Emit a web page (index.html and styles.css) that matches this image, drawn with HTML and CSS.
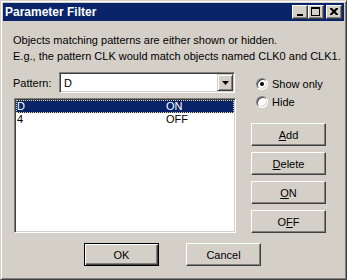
FILE: index.html
```html
<!DOCTYPE html>
<html lang="en">
<head>
  <meta charset="UTF-8">
  <title>Parameter Filter</title>
  <link rel="stylesheet" href="styles.css">
</head>
<body>

  <div class="window">
    <div class="titlebar">
      <span class="title">Parameter Filter</span>
      <div class="title-buttons">
        <button class="tbtn">
          <svg width="6" height="9" viewBox="0 0 6 9"><rect x="0" y="7" width="6" height="2"/></svg>
        </button>
        <button class="tbtn">
          <svg width="9" height="9" viewBox="0 0 9 9"><path fill-rule="evenodd" d="M0 0h9v9H0z M1 2v6h7V2z"/></svg>
        </button>
        <button class="tbtn close">
          <svg width="8" height="7" viewBox="0 0 8 7"><path d="M0 0h2l2 2 2-2h2v1L5.5 3.5 8 6v1H6L4 5 2 7H0V6l2.5-2.5L0 1z"/></svg>
        </button>
      </div>
    </div>

    <div class="content">
      <p class="intro">
        Objects matching patterns are either shown or hidden.<br>
        E.g., the pattern CLK would match objects named CLK0 and CLK1.
      </p>

      <div class="main">
        <div class="left">
          <div class="pattern-row">
            <label class="pattern-label">Pattern:</label>
            <div class="combo">
              <span class="combo-text">D</span>
              <span class="combo-btn">
                <svg width="7" height="4" viewBox="0 0 7 4"><path d="M0 0h7L3.5 4z"/></svg>
              </span>
            </div>
          </div>

          <!-- pattern list -->
          <div class="list">
            <div class="item selected"><span class="name">D</span><span class="state">ON</span></div>
            <div class="item"><span class="name">4</span><span class="state">OFF</span></div>
          </div>
        </div>

        <div class="right">
          <div class="radios">
            <div class="radio-row"><span class="radio checked"></span>Show only</div>
            <div class="radio-row"><span class="radio"></span>Hide</div>
          </div>
          <div class="side-buttons">
            <button class="btn"><u>A</u>dd</button>
            <button class="btn"><u>D</u>elete</button>
            <button class="btn"><u>O</u>N</button>
            <button class="btn">O<u>F</u>F</button>
          </div>
        </div>
      </div>

      <div class="footer">
        <button class="btn default">OK</button>
        <button class="btn">Cancel</button>
      </div>
    </div>
  </div>

</body>
</html>
```

FILE: styles.css
```css
body {
  margin: 0;
  font-family: 'Liberation Sans', Arial, sans-serif;
  font-size: 11px;
  color: #000;
  background: #d4d0c8;
}

.window {
  box-sizing: border-box;
  width: 347px;
  height: 280px;
  padding: 2px;
  background: #d4d0c8;
  border: 1px solid;
  border-color: #d4d0c8 #404040 #404040 #d4d0c8;
  box-shadow: inset 1px 1px #fff, inset -1px -1px #808080;
  display: flex;
  flex-direction: column;
}

/* Title bar */
.titlebar {
  height: 18px;
  background: #0a246a;
  display: flex;
  align-items: center;
  justify-content: space-between;
  padding: 0 2px;
}

.title {
  color: #fff;
  font-weight: bold;
  font-size: 12px;
}

.title-buttons {
  display: flex;
}

.tbtn {
  box-sizing: border-box;
  width: 16px;
  height: 14px;
  padding: 0;
  margin: 0;
  background: #d4d0c8;
  border: 1px solid;
  border-color: #fff #404040 #404040 #fff;
  box-shadow: inset -1px -1px #808080;
  display: flex;
  align-items: center;
  justify-content: center;
}

.tbtn svg {
  fill: #000;
  margin: 0 1px 1px 0;
}

.tbtn.close {
  margin-left: 2px;
}

/* Content */
.content {
  flex: 1;
  padding: 0 0 0 10px;
  display: flex;
  flex-direction: column;
}

.intro {
  margin: 11px 0 0;
  line-height: 16px;
}

.main {
  display: flex;
  gap: 15px;
  margin-top: 8px;
}

.left {
  width: 223px;
}

.pattern-row {
  display: flex;
  align-items: center;
  height: 21px;
}

.pattern-label {
  width: 46px;
}

.combo {
  box-sizing: border-box;
  width: 176px;
  height: 21px;
  background: #fff;
  border: 1px solid;
  border-color: #808080 #fff #fff #808080;
  box-shadow: inset 1px 1px #404040, inset -1px -1px #d4d0c8;
  padding: 1px;
  display: flex;
  align-items: center;
}

.combo-text {
  flex: 1;
  padding-left: 3px;
}

.combo-btn {
  box-sizing: border-box;
  width: 16px;
  height: 17px;
  background: #d4d0c8;
  border: 1px solid;
  border-color: #d4d0c8 #404040 #404040 #d4d0c8;
  box-shadow: inset 1px 1px #fff, inset -1px -1px #808080;
  display: flex;
  align-items: center;
  justify-content: center;
}

.combo-btn svg {
  fill: #000;
}

/* List */
.list {
  box-sizing: border-box;
  height: 135px;
  margin: 5px 0 0 1px;
  background: #fff;
  border: 1px solid;
  border-color: #808080 #fff #fff #808080;
  box-shadow: inset 1px 1px #404040, inset -1px -1px #d4d0c8;
  padding: 1px;
}

.item {
  position: relative;
  display: flex;
  height: 13px;
  line-height: 13px;
  padding-left: 1px;
}

.item .name {
  width: 149px;
}

.item.selected {
  background: #0a246a;
  color: #fff;
}

.item.selected::after {
  content: "";
  position: absolute;
  inset: 0;
  border: 1px dotted #e6dc9a;
}

/* Right column */
.right {
  width: 75px;
}

.radios {
  padding-top: 3px;
}

.radio-row {
  display: flex;
  align-items: center;
  height: 18px;
}

.radio {
  box-sizing: border-box;
  width: 12px;
  height: 12px;
  margin: 0 4px 0 5px;
  border-radius: 50%;
  background: #fff;
  border: 1px solid;
  border-color: #808080 #fff #fff #808080;
  box-shadow: inset 1px 1px #404040, inset -1px -1px #d4d0c8;
  position: relative;
}

.radio.checked::after {
  content: "";
  position: absolute;
  left: 3px;
  top: 3px;
  width: 4px;
  height: 4px;
  border-radius: 50%;
  background: #000;
}

.side-buttons {
  display: flex;
  flex-direction: column;
  gap: 6px;
  margin-top: 12px;
}

.btn {
  box-sizing: border-box;
  width: 75px;
  height: 23px;
  padding: 0;
  font-family: inherit;
  font-size: 11px;
  color: #000;
  background: #d4d0c8;
  border: 1px solid;
  border-color: #fff #404040 #404040 #fff;
  box-shadow: inset -1px -1px #808080;
}

.btn.default {
  border: 1px solid #000;
  box-shadow: inset 1px 1px #fff, inset -1px -1px #404040, inset -2px -2px #808080;
}

.footer {
  display: flex;
  justify-content: center;
  gap: 27px;
  margin: 10px 0 0 -12px;
}
```
